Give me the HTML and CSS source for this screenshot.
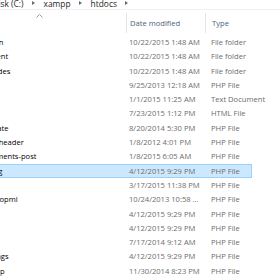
FILE: index.html
```html
<!DOCTYPE html>
<html lang="en">
  <head>
    <meta charset="UTF-8" />
    <meta name="viewport" content="width=device-width, initial-scale=1.0" />
    <title>htdocs</title>
    <link rel="stylesheet" href="styles.css">
  </head>
  <body>
    <div class="window">
      <div class="address">
        <span class="crumb">Local Disk (C:)</span>
        <span class="chev"></span>
        <span class="crumb">xampp</span>
        <span class="chev"></span>
        <span class="crumb">htdocs</span>
        <span class="chev"></span>
      </div>

      <div class="list">
        <div class="row head">
          <div class="col-name">
            Name
            <svg class="sort" width="7" height="4" viewBox="0 0 7 4">
              <polyline points="0.5,3.5 3.5,0.5 6.5,3.5" fill="none" stroke="#a0a0a0" stroke-width="1" />
            </svg>
          </div>
          <div class="col-date sep">Date modified</div>
          <div class="col-type sep">Type</div>
        </div>

        <div class="row"><div class="col-name">wp-admin</div><div class="col-date">10/22/2015 1:48 AM</div><div class="col-type">File folder</div></div>
        <div class="row"><div class="col-name">wp-content</div><div class="col-date">10/22/2015 1:48 AM</div><div class="col-type">File folder</div></div>
        <div class="row"><div class="col-name">wp-includes</div><div class="col-date">10/22/2015 1:48 AM</div><div class="col-type">File folder</div></div>
        <div class="row"><div class="col-name">index</div><div class="col-date">9/25/2013 12:18 AM</div><div class="col-type">PHP File</div></div>
        <div class="row"><div class="col-name">license</div><div class="col-date">1/1/2015 11:25 AM</div><div class="col-type">Text Document</div></div>
        <div class="row"><div class="col-name">readme</div><div class="col-date">7/23/2015 1:12 PM</div><div class="col-type">HTML File</div></div>
        <div class="row"><div class="col-name">wp-activate</div><div class="col-date">8/20/2014 5:30 PM</div><div class="col-type">PHP File</div></div>
        <div class="row"><div class="col-name">wp-blog-header</div><div class="col-date">1/8/2012 4:01 PM</div><div class="col-type">PHP File</div></div>
        <div class="row"><div class="col-name">wp-comments-post</div><div class="col-date">1/8/2015 6:05 AM</div><div class="col-type">PHP File</div></div>
        <div class="row selected"><div class="col-name">wp-config</div><div class="col-date">4/12/2015 9:29 PM</div><div class="col-type">PHP File</div></div>
        <div class="row"><div class="col-name">wp-cron</div><div class="col-date">3/17/2015 11:38 PM</div><div class="col-type">PHP File</div></div>
        <div class="row"><div class="col-name">wp-links-opml</div><div class="col-date">10/24/2013 10:58 ...</div><div class="col-type">PHP File</div></div>
        <div class="row"><div class="col-name">wp-load</div><div class="col-date">4/12/2015 9:29 PM</div><div class="col-type">PHP File</div></div>
        <div class="row"><div class="col-name">wp-login</div><div class="col-date">4/12/2015 9:29 PM</div><div class="col-type">PHP File</div></div>
        <div class="row"><div class="col-name">wp-mail</div><div class="col-date">7/17/2014 9:12 AM</div><div class="col-type">PHP File</div></div>
        <div class="row"><div class="col-name">wp-settings</div><div class="col-date">4/12/2015 9:29 PM</div><div class="col-type">PHP File</div></div>
        <div class="row"><div class="col-name">wp-signup</div><div class="col-date">11/30/2014 8:23 PM</div><div class="col-type">PHP File</div></div>
      </div>
    </div>
  </body>
</html>
```

FILE: styles.css
```css
* {
  padding: 0;
  margin: 0;
  box-sizing: border-box;
}
body {
  width: 280px;
  height: 280px;
  overflow: hidden;
  background: #ffffff;
  font-family: "Open Sans", "Noto Sans", sans-serif;
  font-size: 7.6px;
  color: #1a1a1a;
}
.window {
  margin-left: -60px;
  width: 360px;
}

/* barra de direccion */

.address {
  display: flex;
  align-items: center;
  gap: 8.5px;
  height: 13px;
  padding-left: 30px;
  margin-top: -3px;
  font-size: 8.4px;
  color: #1e1e1e;
  border-bottom: 1px solid #f0f0f0;
}
.chev {
  width: 0;
  height: 0;
  border-top: 2.5px solid transparent;
  border-bottom: 2.5px solid transparent;
  border-left: 3px solid #6a6a6a;
}

/* lista de archivos */

.row {
  display: grid;
  grid-template-columns: 185px 79px 48px;
  width: 312px;
  height: 14.3px;
  align-items: center;
  white-space: nowrap;
  border: 1px solid transparent;
}
.col-name {
  padding-left: 27px;
  color: #000000;
  overflow: hidden;
}
.col-date {
  padding-left: 3px;
  color: #6d6d6d;
  overflow: hidden;
}
.col-type {
  padding-left: 6px;
  color: #6d6d6d;
}
.head {
  height: 24.85px;
  width: 360px;
  position: relative;
  align-items: stretch;
}
.head > div {
  display: flex;
  align-items: center;
  padding-top: 1px;
  color: #4c607a;
}
.head .col-name {
  color: transparent;
  position: relative;
}
.sort {
  position: absolute;
  left: 95px;
  top: 3px;
}
.sep {
  border-left: 1px solid #e5e5e5;
  margin: 2px 0 1px;
}
.selected {
  background: #cce8ff;
  border-color: #99d1ff;
}
```
